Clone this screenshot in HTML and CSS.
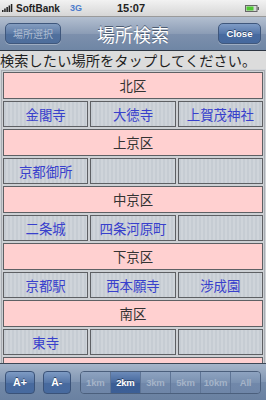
FILE: index.html
```html
<!DOCTYPE html>
<html lang="ja">
<head>
<meta charset="utf-8">
<title>場所検索</title>
<link rel="stylesheet" href="styles.css">
</head>
<body>
<div class="screen">
  <div class="status">
    <div class="status-left">
      <svg class="signal" width="11" height="8" viewBox="0 0 11 8">
        <rect x="0" y="6" width="1.5" height="2" fill="#222"/>
        <rect x="2.2" y="4.5" width="1.5" height="3.5" fill="#222"/>
        <rect x="4.4" y="3" width="1.5" height="5" fill="#222"/>
        <rect x="6.6" y="1.5" width="1.5" height="6.5" fill="#222"/>
        <rect x="8.8" y="0" width="1.5" height="8" fill="#222"/>
      </svg>
      <span class="carrier">SoftBank</span>
      <span class="net">3G</span>
    </div>
    <div class="time">15:07</div>
    <div class="status-right">
      <svg width="14" height="7" viewBox="0 0 14 7">
        <rect x="0.5" y="0.5" width="11.5" height="6" fill="#d8d8d8" stroke="#666" stroke-width="1"/>
        <rect x="1.5" y="1.5" width="7" height="4" fill="#4fc832"/>
        <rect x="12.5" y="2" width="1.5" height="3" fill="#666"/>
      </svg>
    </div>
  </div>

  <div class="navbar">
    <div class="nav-left"><span class="nav-btn back">場所選択</span></div>
    <div class="nav-title">場所検索</div>
    <div class="nav-right"><span class="nav-btn close">Close</span></div>
  </div>

  <div class="hint">検索したい場所をタップしてください。</div>

  <div class="content">
    <div class="grid">
      <div class="hdr">北区</div>
      <div class="cell">金閣寺</div><div class="cell">大徳寺</div><div class="cell">上賀茂神社</div>
      <div class="hdr">上京区</div>
      <div class="cell">京都御所</div><div class="cell"></div><div class="cell"></div>
      <div class="hdr">中京区</div>
      <div class="cell">二条城</div><div class="cell">四条河原町</div><div class="cell"></div>
      <div class="hdr">下京区</div>
      <div class="cell">京都駅</div><div class="cell">西本願寺</div><div class="cell">渉成園</div>
      <div class="hdr">南区</div>
      <div class="cell">東寺</div><div class="cell"></div><div class="cell"></div>
      <div class="hdr">東山区</div>
    </div>
  </div>

  <div class="toolbar">
    <span class="tb-btn">A+</span>
    <span class="tb-btn">A-</span>
    <div class="seg">
      <span class="seg-item">1km</span>
      <span class="seg-item on">2km</span>
      <span class="seg-item">3km</span>
      <span class="seg-item">5km</span>
      <span class="seg-item">10km</span>
      <span class="seg-item">All</span>
    </div>
  </div>
</div>
</body>
</html>
```

FILE: styles.css
```css
* { box-sizing: border-box; }
html, body { margin: 0; padding: 0; }
body {
  width: 266px;
  height: 400px;
  overflow: hidden;
  font-family: "Liberation Sans", "Noto Sans CJK JP", sans-serif;
}
.screen {
  width: 266px;
  height: 400px;
  display: flex;
  flex-direction: column;
  background: #d2d4d8;
}
.status {
  height: 17px;
  flex: none;
  display: grid;
  grid-template-columns: 1fr auto 1fr;
  align-items: center;
  padding: 0 6px 0 2px;
  background: linear-gradient(#f2f2f2, #d6d6d6);
  border-bottom: 1px solid #9a9a9a;
  font-weight: bold;
  font-size: 10px;
  color: #222;
}
.status-left { display: flex; align-items: center; gap: 2px; }
.signal { margin-right: 1px; }
.carrier { font-size: 10px; }
.net { color: #4d7ccc; font-size: 9px; margin-left: 8px; }
.time { font-size: 11px; }
.status-right { display: flex; justify-content: flex-end; padding-right: 1px; }

.navbar {
  height: 34px;
  flex: none;
  display: grid;
  grid-template-columns: 1fr auto 1fr;
  align-items: center;
  padding: 0 5px;
  background: linear-gradient(#b3bfd0, #8c9db6 50%, #7d90ad 51%, #6f86a5);
  border-bottom: 1px solid #2d3642;
}
.nav-right { display: flex; justify-content: flex-end; }
.nav-title {
  color: #fff;
  font-family: "Noto Sans CJK JP", sans-serif;
  font-size: 18px;
  line-height: 20px;
  text-shadow: 0 -1px 0 #4d5c72;
}
.nav-btn {
  display: inline-flex;
  align-items: center;
  justify-content: center;
  height: 21px;
  border-radius: 5px;
  border: 1px solid #3f577c;
  font-size: 9.5px;
  box-shadow: 0 1px 0 rgba(255,255,255,0.3);
}
.back {
  width: 56px;
  background: linear-gradient(#849dc0, #5d7ba6 50%, #50709d 51%, #4e6e9c);
  color: #aebdd2;
  font-family: "Noto Sans CJK JP", sans-serif;
  font-size: 10px;
}
.close {
  width: 43px;
  background: linear-gradient(#7f9cc6, #5577aa 50%, #476a9f 51%, #46699e);
  color: #fff;
  font-weight: bold;
  text-shadow: 0 -1px 0 #2f4566;
}

.hint {
  height: 18px;
  flex: none;
  background: #dcdcdc;
  color: #1e1e1e;
  font-family: "Noto Sans CJK JP", sans-serif;
  font-size: 14.2px;
  line-height: 18px;
  white-space: nowrap;
  overflow: hidden;
  padding-left: 0;
  letter-spacing: 0.1px;
}

.content {
  flex: 1;
  overflow: hidden;
  padding-top: 1px;
  background: #d0d3d7;
}
.grid {
  margin: 0 1px;
  border: 1px solid #a8acb2;
  padding: 1px 1px;
  display: grid;
  grid-template-columns: repeat(3, 1fr);
  grid-auto-rows: 26.5px;
  gap: 2px;
  background: #cdd0d4;
}
.hdr, .cell {
  border: 1px solid #5e6064;
  display: flex;
  align-items: center;
  justify-content: center;
  font-family: "Noto Sans CJK JP", sans-serif;
  font-size: 13.4px;
  white-space: nowrap;
}
.hdr {
  grid-column: 1 / -1;
  background: #ffd0d0;
  color: #333;
}
.cell {
  background: repeating-linear-gradient(90deg, #c6ccd3 0 2px, #cfd4da 2px 4px);
  color: #3840cc;
}

.toolbar {
  height: 37px;
  flex: none;
  display: flex;
  align-items: center;
  padding: 0 5px;
  gap: 8px;
  background: linear-gradient(#a6b5c9, #8196b3 50%, #7389a8 51%, #6a81a1);
  border-top: 1px solid #3c4756;
}
.tb-btn {
  width: 30px;
  height: 23px;
  display: inline-flex;
  align-items: center;
  justify-content: center;
  border-radius: 4px;
  border: 1px solid #3a5278;
  background: linear-gradient(#7e9bc4, #5677a8 50%, #486a9e 51%, #476a9f);
  color: #fff;
  font-weight: bold;
  font-size: 10.5px;
  text-shadow: 0 -1px 0 #2f4566;
}
.tb-btn + .tb-btn { width: 28px; margin-right: 1px; }
.seg {
  display: flex;
  width: 182px;
  height: 23px;
  border: 1px solid #4b5f7c;
  border-radius: 4px;
  overflow: hidden;
}
.seg-item {
  flex: 1;
  display: flex;
  align-items: center;
  justify-content: center;
  background: linear-gradient(#8ea3c0, #7a91b1 50%, #7188aa 51%, #6f86a8);
  color: #a4b3c8;
  font-weight: bold;
  font-size: 9.5px;
  letter-spacing: -0.2px;
  border-left: 1px solid #5f7596;
  white-space: nowrap;
}
.seg-item:first-child { border-left: 0; }
.seg-item.on {
  background: linear-gradient(#6c8bb9, #46689d 50%, #3b5e95 51%, #3c5f96);
  color: #fff;
  text-shadow: 0 -1px 0 #2a3e5e;
}
```
